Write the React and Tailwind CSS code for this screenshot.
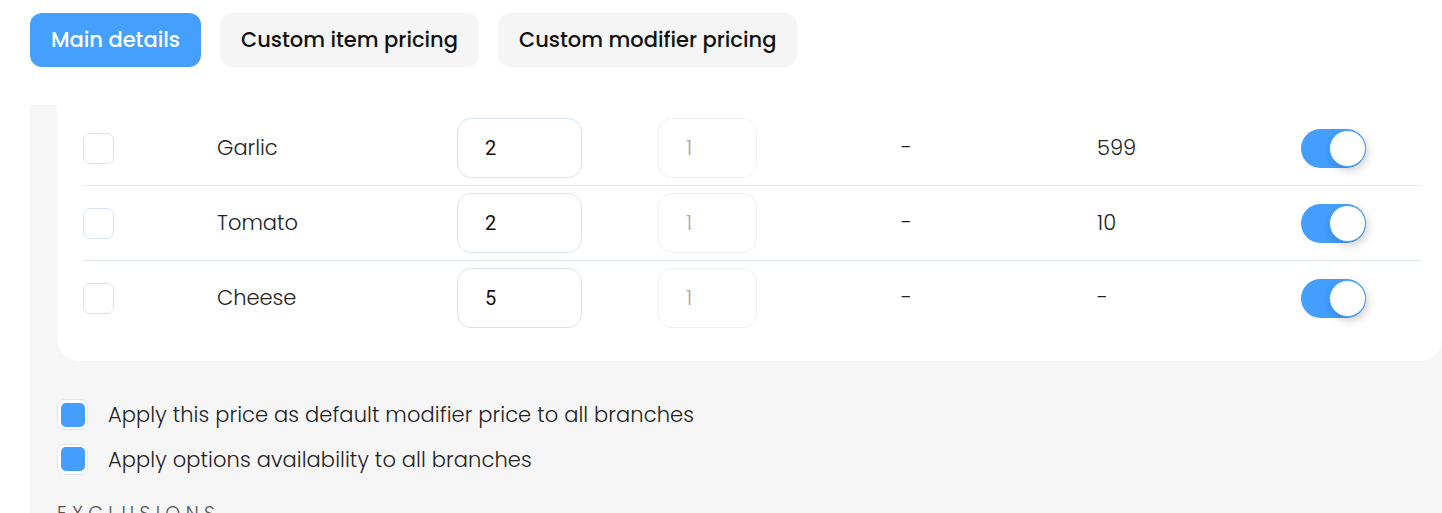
import React, { useState } from "react";

const font = { fontFamily: "Poppins, 'Open Sans', 'Noto Sans', sans-serif" };

const rows = [
  { name: "Garlic", price: "2", qty: "1", extra: "-", value: "599" },
  { name: "Tomato", price: "2", qty: "1", extra: "-", value: "10" },
  { name: "Cheese", price: "5", qty: "1", extra: "-", value: "-" },
];

const Toggle = () => (
  <div className="w-[65px] h-[39px] rounded-full bg-[#439efd] flex items-center justify-end">
    <div className="w-[37px] h-[37px] rounded-full bg-white border border-[#439efd] shadow-[2px_4px_8px_rgba(0,0,0,0.18)]"></div>
  </div>
);

const BlueCheck = () => (
  <div className="w-[31px] h-[31px] rounded-[7px] bg-white border border-[#dfe8f2] flex items-center justify-center">
    <div className="w-[24px] h-[24px] rounded-[5px] bg-[#439efd]"></div>
  </div>
);

export default function App() {
  const [tab, setTab] = useState(0);
  const tabs = ["Main details", "Custom item pricing", "Custom modifier pricing"];

  return (
    <div style={font} className="w-[1442px] h-[513px] overflow-hidden bg-white">
      <div className="flex gap-[19px] pl-[30px] pt-[13px]">
        {tabs.map((t, i) => (
          <button
            key={i}
            onClick={() => setTab(i)}
            className={`h-[54px] px-[21px] rounded-[12px] text-[21px] font-medium ${
              tab === i ? "bg-[#449ffd] text-white" : "bg-[#f5f5f5] text-[#111]"
            }`}
          >
            {t}
          </button>
        ))}
      </div>

      <div className="mt-[38px] ml-[30px] bg-[#f6f6f6] pl-[27px]">
        <div className="bg-white rounded-bl-[22px] rounded-br-[22px] pl-[26px] pr-[21px] pt-[6px] pb-[26px]">
          {rows.map((r, i) => (
            <div
              key={i}
              className={`flex items-center py-[7px] text-[21px] font-light text-[#222] ${
                i < rows.length - 1 ? "border-b border-[#dfe7ef]" : ""
              }`}
            >
              <div className="w-[134px]">
                <div className="w-[31px] h-[31px] rounded-[7px] border border-[#d6e4f0]"></div>
              </div>
              <div className="w-[240px]">{r.name}</div>
              <div className="w-[201px]">
                <div className="w-[125px] h-[60px] rounded-[14px] border border-[#d6e4f0] flex items-center pl-[27px] font-normal text-[20px] text-[#111] font-['Roboto','Liberation_Sans',sans-serif]">
                  {r.price}
                </div>
              </div>
              <div className="w-[243px]">
                <div className="w-[99px] h-[60px] rounded-[14px] border border-[#eef1f5] flex items-center pl-[27px] text-[#aaa]">
                  {r.qty}
                </div>
              </div>
              <div className="w-[196px]">{r.extra}</div>
              <div className="w-[204px]">{r.value}</div>
              <Toggle />
            </div>
          ))}
        </div>

        <div className="pt-[38px] flex flex-col gap-[13px]">
          <div className="flex items-center gap-[20px] text-[21px] font-light text-[#222]">
            <BlueCheck />
            <span className="tracking-[0.1px]">Apply this price as default modifier price to all branches</span>
          </div>
          <div className="flex items-center gap-[20px] text-[21px] font-light text-[#222]">
            <BlueCheck />
            <span className="tracking-[0.1px]">Apply options availability to all branches</span>
          </div>
        </div>

        <div className="pt-[25px] text-[19px] font-light tracking-[0.28em] text-[#555]">EXCLUSIONS</div>
      </div>
    </div>
  );
}
